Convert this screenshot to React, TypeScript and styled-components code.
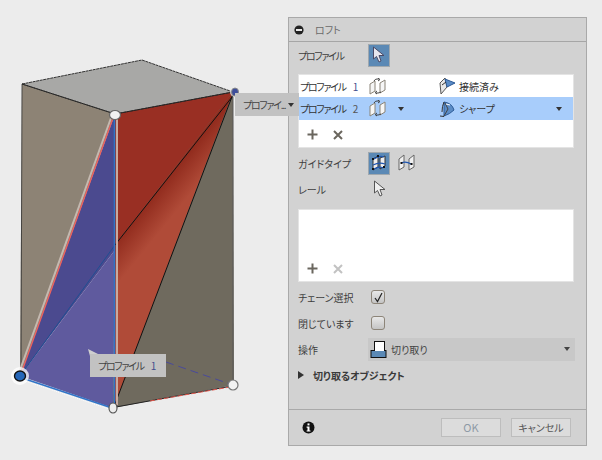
import React from 'react';
import styled, { createGlobalStyle } from 'styled-components';

const GlobalStyle = createGlobalStyle`
  html, body {
    margin: 0;
    padding: 0;
    background: #ececec;
  }
`;

const Page = styled.div`
  position: relative;
  width: 602px;
  height: 460px;
  overflow: hidden;
  background: #ececec;
  display: flex;
  align-items: flex-start;
  font-family: "Noto Sans CJK JP", "Liberation Sans", sans-serif;
  font-feature-settings: "palt";
  font-size: 10px;
  color: #3c3c3c;
`;

const Viewport = styled.svg`
  flex: 0 0 288px;
  width: 288px;
  height: 460px;
  display: block;
`;

const ViewTip = styled.div<{ $left: number; $top: number; $w: number }>`
  position: absolute;
  left: ${p => p.$left}px;
  top: ${p => p.$top}px;
  width: ${p => p.$w}px;
  height: 23px;
  background: #c2c2c2;
  color: #444;
  font-size: 10px;
  padding: 0 5px 0 8px;
  box-sizing: border-box;
  white-space: nowrap;
  display: flex;
  align-items: center;
  justify-content: space-between;
`;

const Panel = styled.div`
  margin-top: 17px;
  width: 299px;
  height: 429px;
  box-sizing: border-box;
  background: #d2d2d2;
  border: 1px solid #a9a9a9;
  display: flex;
  flex-direction: column;
`;

const Header = styled.div`
  height: 23px;
  flex: none;
  display: flex;
  align-items: center;
  gap: 11px;
  padding-left: 5px;
  border-bottom: 1px solid #a6a6a6;
  color: #6a6a6a;
`;

const Body = styled.div`
  flex: 1;
  padding: 0 9px;
  display: flex;
  flex-direction: column;
`;

const Row = styled.div<{ $mt?: number }>`
  height: 26px;
  margin-top: ${p => p.$mt ?? 0}px;
  flex: none;
  display: grid;
  grid-template-columns: 70px 1fr;
  align-items: center;
`;

const Label = styled.span`
  color: #3e3e3e;
  white-space: nowrap;
`;

// the katakana of this word runs narrower than the other labels
const ProfileName = styled.span`
  letter-spacing: -1.3px;
`;

const IconRow = styled.div<{ $pl?: number }>`
  display: flex;
  align-items: center;
  gap: 8px;
  padding-left: ${p => p.$pl ?? 0}px;
`;

const IconButton = styled.div`
  width: 22px;
  height: 23px;
  box-sizing: border-box;
  display: flex;
  align-items: center;
  justify-content: center;
  background: #5b89b5;
  border: 1px solid #a0a8ae;
`;

const ListBox = styled.div<{ $h: number; $mt: number }>`
  height: ${p => p.$h}px;
  margin-top: ${p => p.$mt}px;
  margin-right: 3px;
  flex: none;
  box-sizing: border-box;
  background: #fff;
  border: 1px solid #e4e4e4;
  display: flex;
  flex-direction: column;
`;

const ListRow = styled.div<{ $selected?: boolean }>`
  height: ${p => (p.$selected ? 23 : 22)}px;
  flex: none;
  display: grid;
  grid-template-columns: 69px 70px 1fr 17px;
  align-items: center;
  padding-left: 1px;
  background: ${p => (p.$selected ? '#a8cdfb' : 'transparent')};
  color: #333;
  white-space: nowrap;
`;

const CellGroup = styled.div`
  display: flex;
  align-items: center;
  gap: 3px;
`;

const RowIndex = styled.span<{ $blue?: boolean }>`
  color: ${p => (p.$blue ? '#3f4d8c' : '#555')};
  margin-left: 7px;
`;

const Caret = styled.span<{ $color?: string; $ml?: number }>`
  display: inline-block;
  width: 0;
  height: 0;
  margin-left: ${p => p.$ml ?? 0}px;
  border-left: 3.5px solid transparent;
  border-right: 3.5px solid transparent;
  border-top: 4px solid ${p => p.$color ?? '#333'};
`;

const ListTools = styled.div`
  margin-top: auto;
  height: 25px;
  flex: none;
  display: flex;
  align-items: center;
  gap: 15px;
  padding-left: 8px;
`;

const Check = styled.div`
  width: 14px;
  height: 14px;
  margin-left: 3px;
  box-sizing: border-box;
  border: 1.5px solid #8d8579;
  border-radius: 3px;
  background: linear-gradient(#e8e8e8, #c4c4c4);
  display: flex;
  align-items: center;
  justify-content: center;
`;

const Select = styled.div`
  height: 23px;
  display: flex;
  align-items: center;
  gap: 4px;
  padding: 0 5px 0 2px;
  background: #c8c8c8;
  margin-right: 2px;
`;

const SelectText = styled.span`
  flex: 1;
  color: #444;
`;

const GroupRow = styled.div`
  height: 26px;
  flex: none;
  display: flex;
  align-items: center;
  gap: 9px;
  font-weight: 700;
  color: #3a3a3a;
`;

const TriRight = styled.span`
  width: 0;
  height: 0;
  border-top: 4.5px solid transparent;
  border-bottom: 4.5px solid transparent;
  border-left: 6px solid #333;
`;

const Footer = styled.div`
  height: 36px;
  flex: none;
  box-sizing: border-box;
  border-top: 1px solid #a9a9a9;
  display: flex;
  align-items: center;
  padding: 0 15px 0 13px;
`;

const FooterButtons = styled.div`
  margin-left: auto;
  display: flex;
  align-items: center;
  gap: 10px;
`;

const Btn = styled.div<{ $disabled?: boolean }>`
  width: 60px;
  height: 19px;
  line-height: 17px;
  box-sizing: border-box;
  text-align: center;
  background: #dcdcdc;
  border: 1px solid #bdbdbd;
  font-size: ${p => (p.$disabled ? 11 : 10)}px;
  color: ${p => (p.$disabled ? '#8e9aa6' : '#555')};
`;

const LoftIcon = () => (
  <svg width="17" height="17" viewBox="0 0 17 17">
    <path d="M1 6 L6 3 V13 L1 16 Z" fill="#f6f6f6" stroke="#8a8478" />
    <path d="M11 5 L16 2 V12 L11 15 Z" fill="#f6f6f6" stroke="#8a8478" />
    <path d="M5 3 Q6 1 8 1 H10 M9 0 L11 1.5 L9 3" fill="none" stroke="#333" strokeWidth="0.9" />
    <path d="M12 14 Q10 15 9 15 H7 M8 13 L6 14.5 L8 16" fill="none" stroke="#333" strokeWidth="0.9" />
  </svg>
);

const ConnectedIcon = () => (
  <svg width="17" height="18" viewBox="0 0 17 18">
    <path d="M1 6 L6 1 L8 10 L2 17 Z" fill="#e8e8e8" stroke="#555" />
    <path d="M6 2 L16 6 L8 10 Z" fill="#5b8cc6" stroke="#2c5a96" />
    <path d="M3 8 L7 5" stroke="#333" />
  </svg>
);

const SharpIcon = () => (
  <svg width="17" height="18" viewBox="0 0 17 18">
    <path d="M5 2 Q13 3 15 10 Q11 14 5 16 Z" fill="#5b8cc6" stroke="#2c5a96" />
    <path d="M6 3 L9 9 L5 16" fill="none" stroke="#444" />
    <path d="M1 16 L5 16.5 M5 2 Q3 6 3 12" fill="none" stroke="#333" />
    <path d="M7 4 L11 5" stroke="#fff" />
  </svg>
);

const ArrowIcon = ({ outline }: { outline?: boolean }) => (
  <svg width="14" height="18" viewBox="0 0 14 18">
    <path
      d="M1.5 1 V13 L4.5 10.5 L7 16 L9 15 L7 9.5 H12 Z"
      fill={outline ? '#f0f0f0' : '#e6e6ee'}
      stroke={outline ? '#555' : '#4a4a66'}
    />
  </svg>
);

const RailIcon = () => (
  <svg width="18" height="18" viewBox="0 0 18 18">
    <path d="M3 5 L8 2 V13 L3 16 Z" fill="#eee" stroke="#333" />
    <path d="M10 4 L15 2 V12 L10 15 Z" fill="#eee" stroke="#333" />
    <path d="M4 5 Q9 1 14 3 M3 11 Q9 8 15 10 M4 15 Q9 12 13 14" stroke="#1f56b0" strokeWidth="1.2" fill="none" />
    <rect x="2" y="4" width="2" height="2" fill="#111" />
    <rect x="7" y="1" width="2" height="2" fill="#111" />
    <rect x="2" y="14" width="2" height="2" fill="#111" />
    <rect x="13" y="12" width="2" height="2" fill="#111" />
  </svg>
);

const CenterIcon = () => (
  <svg width="17" height="18" viewBox="0 0 17 18">
    <path d="M1 5 L6 1 V13 L1 16 Z" fill="#f0f0f0" stroke="#666" />
    <path d="M11 5 L16 1 V13 L11 16 Z" fill="#f0f0f0" stroke="#666" />
    <path d="M3 9 Q8 7 13 10" stroke="#1f56b0" strokeWidth="1.3" fill="none" />
    <rect x="2.5" y="8" width="2" height="2" fill="#111" />
    <rect x="12.5" y="9" width="2" height="2" fill="#111" />
  </svg>
);

const PlusIcon = () => (
  <svg width="11" height="11" viewBox="0 0 11 11">
    <path d="M5.5 0.5 V10.5 M0.5 5.5 H10.5" stroke="#6a665e" strokeWidth="2" />
  </svg>
);

const CrossIcon = ({ faded }: { faded?: boolean }) => (
  <svg width="10" height="10" viewBox="0 0 10 10">
    <path d="M1 1 L9 9 M9 1 L1 9" stroke={faded ? '#c2c2c2' : '#6a665e'} strokeWidth="2" />
  </svg>
);

const CutIcon = () => (
  <svg width="17" height="17" viewBox="0 0 17 17">
    <rect x="4.5" y="0.5" width="10" height="9" fill="#fff" stroke="#111" />
    <rect x="1" y="9.5" width="15" height="7" fill="#5b89b5" stroke="#111" />
    <path d="M4.5 9.5 H14.5" stroke="#111" />
    <rect x="5" y="7" width="9" height="3" fill="#fff" />
  </svg>
);

export default function App() {
  return (
    <Page>
      <GlobalStyle />
      <Viewport viewBox="0 0 288 460">
        <defs>
          <linearGradient id="redLow" gradientUnits="userSpaceOnUse" x1="129" y1="227" x2="150" y2="244">
            <stop offset="0" stopColor="#922c1e" />
            <stop offset="1" stopColor="#b04b38" />
          </linearGradient>
        </defs>
        <polygon points="22,84 142,60 233,92 115,114" fill="#a8a8a6" />
        <polygon points="22,84 115,114 20,376" fill="#8d8375" />
        <polygon points="115,114 233,92 234,385 113,408" fill="#6f6a5e" />
        <polygon points="115,114 233,92 115,245" fill="#992f23" />
        <polygon points="233,92 115,245 115,404" fill="url(#redLow)" />
        <polygon points="115,114 20,376 115,250" fill="#4b4a8f" />
        <polygon points="115,250 20,376 113,408" fill="#5f5a9e" />
        <path d="M22 84 L142 60 L233 92 L115 114 Z M22 84 L115 114" fill="none" stroke="#222" strokeWidth="0.9" strokeDasharray="3 0.6" />
        <path d="M115 114 L233 92" stroke="#222" strokeWidth="0.8" />
        <path d="M22 84 L21 376" stroke="#333" strokeWidth="0.8" />
        <path d="M233 92 L233 385" stroke="#555" strokeWidth="0.9" />
        <path d="M232 97 L115 245" stroke="#111" strokeWidth="1" />
        <path d="M115 245 L23 372" stroke="#1f4f92" strokeWidth="1" />
        <path d="M233 94 L115 404" stroke="#111" strokeWidth="1" />
        <path d="M111 118 L20 370" stroke="#c4b9b0" strokeWidth="2" />
        <path d="M113 118 L22 371" stroke="#f0605c" strokeWidth="1.3" />
        <path d="M114.5 118 V405" stroke="#2f74c8" strokeWidth="1.6" />
        <path d="M117 118 V405" stroke="#c8aaa0" strokeWidth="2" />
        <path d="M22 378 L112 408" stroke="#2f74c8" strokeWidth="1.6" />
        <path d="M22 380 L112 410" stroke="#fff" strokeWidth="1" strokeDasharray="1 1" />
        <path d="M116 407 L232 386" stroke="#222" strokeWidth="1" />
        <path d="M150 401 L230 387" stroke="#e2574c" strokeWidth="1" strokeDasharray="5 2" />
        <path d="M166 362 L230 384" stroke="#4a4a9a" strokeWidth="1" strokeDasharray="8 5" />
        <circle cx="20" cy="376" r="9" fill="#ffffff" opacity="0.75" />
        <ellipse cx="20" cy="376" rx="5.5" ry="5" fill="#2566b8" stroke="#111" strokeWidth="1.4" />
        <ellipse cx="115" cy="115" rx="5.5" ry="4.5" fill="#f2f2f2" stroke="#666" strokeWidth="1.2" />
        <ellipse cx="113" cy="408" rx="4" ry="5" fill="#ececec" stroke="#555" strokeWidth="1.2" />
        <circle cx="233" cy="385" r="5" fill="#f2f2f2" stroke="#777" strokeWidth="1.2" />
        <circle cx="235" cy="92" r="5" fill="#eeeeee" opacity="0.8" />
        <ellipse cx="235" cy="92" rx="3.5" ry="4" fill="#3e4e9a" stroke="#8a8a8a" strokeWidth="1" />
        <polygon points="88,349 100,355 90,356" fill="#cfcfcf" />
      </Viewport>
      <Panel>
        <Header>
          <svg width="10" height="10" viewBox="0 0 10 10">
            <circle cx="5" cy="5" r="4.6" fill="#222" />
            <rect x="2" y="4" width="6" height="2" fill="#e8e8e8" />
          </svg>
          <span>ロフト</span>
        </Header>
        <Body>
          <Row>
            <Label><ProfileName>プロファイル</ProfileName></Label>
            <IconButton><ArrowIcon /></IconButton>
          </Row>
          <ListBox $h={74} $mt={6}>
            <ListRow>
              <span><ProfileName>プロファイル</ProfileName><RowIndex $blue>1</RowIndex></span>
              <CellGroup><LoftIcon /></CellGroup>
              <CellGroup><ConnectedIcon />接続済み</CellGroup>
            </ListRow>
            <ListRow $selected>
              <span><ProfileName>プロファイル</ProfileName><RowIndex>2</RowIndex></span>
              <CellGroup><LoftIcon /><Caret $ml={9} /></CellGroup>
              <CellGroup><SharpIcon />シャープ</CellGroup>
              <Caret />
            </ListRow>
            <ListTools><PlusIcon /><CrossIcon /></ListTools>
          </ListBox>
          <Row $mt={2}>
            <Label>ガイドタイプ</Label>
            <IconRow>
              <IconButton><RailIcon /></IconButton>
              <CenterIcon />
            </IconRow>
          </Row>
          <Row>
            <Label>レール</Label>
            <IconRow $pl={5}><ArrowIcon outline /></IconRow>
          </Row>
          <ListBox $h={73} $mt={7}>
            <ListTools><PlusIcon /><CrossIcon faded /></ListTools>
          </ListBox>
          <Row $mt={2}>
            <Label>チェーン選択</Label>
            <Check>
              <svg width="11" height="11" viewBox="0 0 11 11">
                <path d="M2 6 L4.5 9.5 L9 1" fill="none" stroke="#222" strokeWidth="1.2" />
              </svg>
            </Check>
          </Row>
          <Row>
            <Label>閉じています</Label>
            <Check />
          </Row>
          <Row>
            <Label>操作</Label>
            <Select>
              <CutIcon />
              <SelectText>切り取り</SelectText>
              <Caret $color="#444" />
            </Select>
          </Row>
          <GroupRow>
            <TriRight />
            切り取るオブジェクト
          </GroupRow>
        </Body>
        <Footer>
          <svg width="13" height="13" viewBox="0 0 13 13">
            <circle cx="6.5" cy="6.5" r="6" fill="#111" />
            <rect x="5.5" y="2.4" width="2" height="2" fill="#fff" />
            <path d="M4.6 5.6 H7.5 V9.4 H8.5 V10.5 H4.6 V9.4 H5.5 V6.7 H4.6 Z" fill="#fff" />
          </svg>
          <FooterButtons>
            <Btn $disabled>OK</Btn>
            <Btn>キャンセル</Btn>
          </FooterButtons>
        </Footer>
      </Panel>
      <ViewTip $left={235} $top={93} $w={64}><ProfileName>プロファイ...</ProfileName><Caret /></ViewTip>
      <ViewTip $left={90} $top={354} $w={76}><span><ProfileName>プロファイル</ProfileName><RowIndex $blue>1</RowIndex></span></ViewTip>
    </Page>
  );
}
